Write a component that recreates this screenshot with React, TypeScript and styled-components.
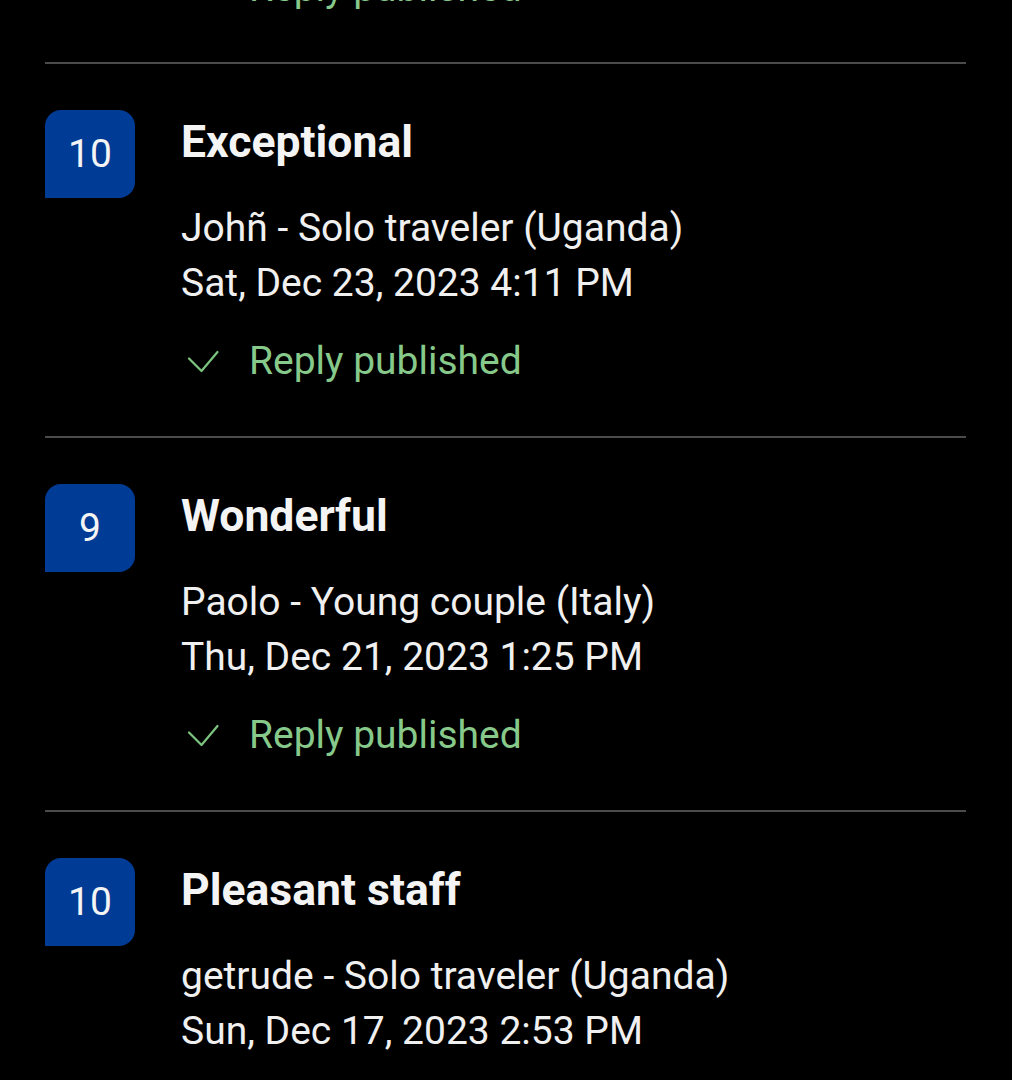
import React from "react";
import styled, { createGlobalStyle } from "styled-components";

const Global = createGlobalStyle`
  html, body { margin: 0; padding: 0; background: #000; }
  body { font-family: Roboto, "Noto Sans", "Liberation Sans", sans-serif; color: #f2f2f2; overflow: hidden; }
`;

const Page = styled.div`
  width: 1012px;
  height: 1080px;
  overflow: hidden;
  background: #000;
  padding: 0 46px 0 45px;
  box-sizing: border-box;
`;

const List = styled.div`
  display: flex;
  flex-direction: column;
  margin-top: -39px;
`;

const TopStub = styled.div`
  padding-left: 136px;
  padding-bottom: 46px;
`;

const Divider = styled.div`
  height: 2px;
  background: #4b4b4b;
`;

const Item = styled.div`
  display: flex;
  align-items: flex-start;
  gap: 46px;
  padding: 46px 0 47px;
`;

const Badge = styled.div`
  flex: none;
  width: 90px;
  height: 88px;
  background: #003b95;
  border-radius: 16px 16px 16px 0;
  display: flex;
  align-items: center;
  justify-content: center;
  color: #f4f4f4;
  font-size: 39px;
  font-weight: 400;
`;

const Content = styled.div`
  display: flex;
  flex-direction: column;
  min-width: 0;
`;

const Title = styled.div`
  font-size: 44.5px;
  font-weight: 700;
  line-height: 64px;
  color: #f4f4f4;
  margin-bottom: 27px;
`;

const Line = styled.div`
  font-size: 39px;
  line-height: 55px;
  color: #f0f0f0;
  white-space: nowrap;
`;

const Reply = styled.div<{ $first?: boolean }>`
  display: flex;
  align-items: center;
  gap: 30px;
  font-size: 39px;
  line-height: 55px;
  color: #86c98a;
  padding-left: 6px;
  margin-top: ${(p) => (p.$first ? "0" : "23px")};
`;

const Check = () => (
  <svg width="32" height="24" viewBox="0 0 32 24" fill="none">
    <path d="M2 8.5 L14.5 21 L30.5 2" stroke="#7cc47f" strokeWidth="2.2" strokeLinecap="round" strokeLinejoin="round" />
  </svg>
);

type Review = { score: number; title: string; who: string; date: string; replied: boolean };

const reviews: Review[] = [
  { score: 10, title: "Exceptional", who: "Johñ - Solo traveler (Uganda)", date: "Sat, Dec 23, 2023 4:11 PM", replied: true },
  { score: 9, title: "Wonderful", who: "Paolo - Young couple (Italy)", date: "Thu, Dec 21, 2023 1:25 PM", replied: true },
  { score: 10, title: "Pleasant staff", who: "getrude - Solo traveler (Uganda)", date: "Sun, Dec 17, 2023 2:53 PM", replied: false },
];

export default function App() {
  return (
    <>
      <Global />
      <Page>
        <List>
          <TopStub>
            <Reply $first>
              <Check />
              <span>Reply published</span>
            </Reply>
          </TopStub>
          {reviews.map((r, i) => (
            <React.Fragment key={i}>
              <Divider />
              <Item>
                <Badge>{r.score}</Badge>
                <Content>
                  <Title>{r.title}</Title>
                  <Line>{r.who}</Line>
                  <Line>{r.date}</Line>
                  {r.replied && (
                    <Reply>
                      <Check />
                      <span>Reply published</span>
                    </Reply>
                  )}
                </Content>
              </Item>
            </React.Fragment>
          ))}
        </List>
      </Page>
    </>
  );
}
